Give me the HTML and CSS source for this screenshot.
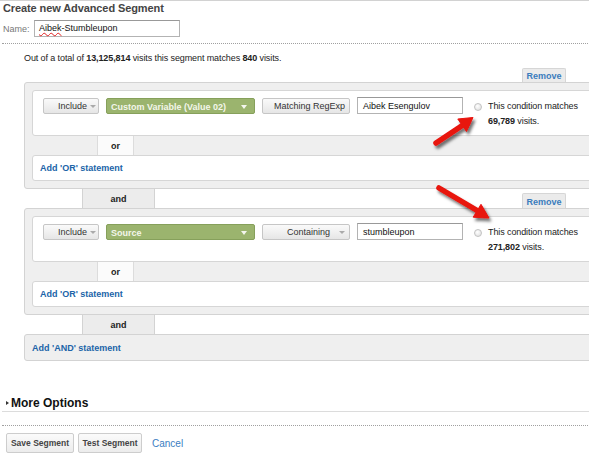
FILE: index.html
```html
<!DOCTYPE html>
<html lang="en">
<head>
<meta charset="utf-8">
<title>Create new Advanced Segment</title>
<link rel="stylesheet" href="styles.css">
</head>
<body>
<div class="page">
  <h1 class="title">Create new Advanced Segment</h1>
  <div class="name-row">
    <span class="name-label">Name:</span>
    <div class="field name-field"><span class="misspelled">Aibek</span>-Stumbleupon</div>
  </div>
  <div class="dotted"></div>
  <p class="summary">Out of a total of <b>13,125,814</b> visits this segment matches <b>840</b> visits.</p>

  <div class="segment">
    <div class="remove-row"><span class="remove">Remove</span></div>
    <div class="group">
      <div class="cond">
        <div class="btn btn-include">Include<span class="caret"></span></div>
        <div class="dim">Custom Variable (Value 02)<span class="caret caret-white"></span></div>
        <div class="btn btn-op btn-match">Matching RegExp</div>
        <div class="field cond-field">Aibek Esengulov</div>
        <span class="radio"></span>
        <div class="matches">This condition matches<br><b>69,789</b> visits.</div>
      </div>
      <div class="or-row"><span class="or">or</span></div>
      <div class="add-or">Add 'OR' statement</div>
    </div>
    <div class="and-row"><span class="and">and</span><span class="remove remove-right">Remove</span></div>
    <div class="group">
      <div class="cond">
        <div class="btn btn-include">Include<span class="caret"></span></div>
        <div class="dim">Source<span class="caret caret-white"></span></div>
        <div class="btn btn-op btn-contain">Containing<span class="caret caret-far"></span></div>
        <div class="field cond-field">stumbleupon</div>
        <span class="radio"></span>
        <div class="matches">This condition matches<br><b>271,802</b> visits.</div>
      </div>
      <div class="or-row"><span class="or">or</span></div>
      <div class="add-or">Add 'OR' statement</div>
    </div>
    <div class="and-row"><span class="and">and</span></div>
    <div class="add-and">Add 'AND' statement</div>
  </div>

  <div class="more"><span class="tri"></span>More Options</div>
  <div class="dotted dotted-bottom"></div>
  <div class="actions">
    <span class="abtn abtn-save">Save Segment</span>
    <span class="abtn abtn-test">Test Segment</span>
    <span class="cancel">Cancel</span>
  </div>
</div>

<svg class="arrows" width="589" height="460" viewBox="0 0 589 460" aria-hidden="true">
  <defs>
    <filter id="sh" x="-30%" y="-30%" width="160%" height="160%">
      <feDropShadow dx="2" dy="3" stdDeviation="1.4" flood-color="#000" flood-opacity="0.55"/>
    </filter>
  </defs>
  <g filter="url(#sh)" fill="#e8130d" stroke="#e8130d">
    <line x1="436" y1="143" x2="463" y2="125" stroke-width="5.5" stroke-linecap="round"/>
    <polygon points="473,117.5 466.5,131.5 457.8,119" stroke-width="1" stroke-linejoin="round"/>
    <line x1="439" y1="188" x2="478" y2="211" stroke-width="5.5" stroke-linecap="round"/>
    <polygon points="489,218 473.2,217.2 481,204.3" stroke-width="1" stroke-linejoin="round"/>
  </g>
</svg>
</body>
</html>
```

FILE: styles.css
```css
html, body {
  margin: 0;
  padding: 0;
  overflow: hidden;
  background: #fff;
}

body {
  font-family: "Liberation Sans", Arial, sans-serif;
  font-size: 9px;
  color: #222;
  position: relative;
  width: 589px;
  height: 460px;
}

.page {
  width: 640px;
  padding-left: 2px;
  border-top: 1px solid #d2d2d2;
}

.title {
  margin: 0;
  padding-left: 1px;
  font-size: 11px;
  font-weight: bold;
  letter-spacing: -0.1px;
  line-height: 14px;
  color: #444;
}

.name-row {
  display: flex;
  align-items: center;
  margin-top: 5px;
  padding-left: 1px;
}

.name-label {
  color: #777;
  width: 31px;
}

.field {
  box-sizing: border-box;
  height: 17px;
  line-height: 15px;
  border: 1px solid #b3b3b3;
  border-top-color: #999;
  background: #fff;
  color: #111;
  padding-left: 4px;
  white-space: nowrap;
}

.name-field {
  width: 146px;
}

.misspelled {
  text-decoration: underline wavy #e02020;
  text-decoration-thickness: 1px;
  text-underline-offset: 1px;
}

.dotted {
  margin-top: 6px;
  border-top: 1px dotted #a0a0a0;
  height: 0;
}

.summary {
  margin: 8px 0 0 22px;
  line-height: 12px;
  letter-spacing: -0.1px;
  color: #222;
}

.segment {
  margin-left: 22px;
  width: 580px;
}

.remove-row {
  display: flex;
  justify-content: flex-end;
  margin-top: 4px;
  padding-right: 38px;
}

.remove {
  box-sizing: border-box;
  width: 44px;
  height: 14px;
  line-height: 15px;
  text-align: center;
  background: #ebebeb;
  border: 1px solid #d6d6d6;
  border-bottom: none;
  border-radius: 2px 2px 0 0;
  font-weight: bold;
  color: #3a7cbd;
}

.group {
  background: #efefef;
  border: 1px solid #d3d3d3;
  border-radius: 3px;
  padding: 7px;
}

.cond {
  box-sizing: border-box;
  height: 46px;
  background: #fff;
  border: 1px solid #d6d6d6;
  border-radius: 3px;
  padding: 7px 0 0 10px;
  display: flex;
  align-items: flex-start;
}

.btn {
  box-sizing: border-box;
  height: 16px;
  line-height: 15px;
  border: 1px solid #c6c6c6;
  border-radius: 2px;
  background: linear-gradient(#fafafa, #e6e6e6);
  color: #333;
  white-space: nowrap;
  overflow: hidden;
  display: flex;
  align-items: center;
}

.btn-include {
  width: 56px;
  padding-left: 14px;
}

.caret {
  display: inline-block;
  width: 0;
  height: 0;
  border-left: 3px solid transparent;
  border-right: 3px solid transparent;
  border-top: 3px solid #aaa;
  margin-left: 3px;
}

.caret-white {
  border-left-width: 3.5px;
  border-right-width: 3.5px;
  border-top: 4px solid #f4f6ee;
  margin-left: 0;
}

.caret-far {
  margin-left: 9px;
}

.dim {
  box-sizing: border-box;
  width: 149px;
  height: 16px;
  margin-left: 7px;
  padding: 1px 7px 0 4px;
  background: #9bb46e;
  border: 1px solid #86a05b;
  border-radius: 2px;
  color: #f3f6ea;
  font-weight: bold;
  display: flex;
  align-items: center;
  justify-content: space-between;
  white-space: nowrap;
}

.btn-op {
  width: 88px;
  margin-left: 7px;
}

.btn-match {
  padding-left: 11px;
}

.btn-contain {
  padding-left: 24px;
}

.cond-field {
  width: 106px;
  margin-left: 7px;
  margin-top: -1px;
  padding-left: 5px;
  line-height: 16px;
}

.radio {
  box-sizing: border-box;
  width: 8px;
  height: 8px;
  margin: 5px 0 0 11px;
  border-radius: 50%;
  border: 1px solid #c2c2c2;
  background: radial-gradient(circle at 40% 35%, #fff, #dcdcdc);
}

.matches {
  margin: 1px 0 0 6px;
  line-height: 15px;
  letter-spacing: -0.1px;
  color: #222;
  white-space: nowrap;
}

.or-row {
  display: flex;
  height: 19px;
}

.or {
  box-sizing: border-box;
  width: 37px;
  margin-left: 65px;
  background: #fbfbfb;
  border-left: 1px solid #dcdcdc;
  border-right: 1px solid #dcdcdc;
  text-align: center;
  line-height: 20px;
  font-weight: bold;
  color: #222;
}

.add-or {
  box-sizing: border-box;
  height: 26px;
  line-height: 25px;
  background: #fff;
  border: 1px solid #d6d6d6;
  border-radius: 3px;
  padding-left: 7px;
  font-weight: bold;
  color: #2064a8;
}

.and-row {
  display: flex;
  align-items: flex-end;
  height: 19px;
}

.and {
  box-sizing: border-box;
  width: 73px;
  height: 19px;
  margin-left: 58px;
  background: #ececec;
  border-left: 1px solid #d3d3d3;
  border-right: 1px solid #d3d3d3;
  text-align: center;
  line-height: 20px;
  font-weight: bold;
  color: #222;
}

.remove-right {
  height: 15px;
  line-height: 16px;
  margin-left: auto;
  margin-right: 38px;
}

.add-and {
  box-sizing: border-box;
  height: 27px;
  line-height: 26px;
  background: #efefef;
  border: 1px solid #d3d3d3;
  border-radius: 3px;
  padding-left: 7px;
  font-weight: bold;
  color: #2064a8;
}

.more {
  margin-top: 34px;
  height: 16px;
  line-height: 17px;
  border-bottom: 1px solid #dcdcdc;
  font-size: 12px;
  font-weight: bold;
  color: #111;
  display: flex;
  align-items: center;
  padding-left: 4px;
}

.tri {
  width: 0;
  height: 0;
  border-top: 2.5px solid transparent;
  border-bottom: 2.5px solid transparent;
  border-left: 3px solid #333;
  margin-right: 2px;
}

.dotted-bottom {
  margin-top: 13px;
}

.actions {
  display: flex;
  align-items: center;
  margin-top: 7px;
  padding-left: 4px;
}

.abtn {
  box-sizing: border-box;
  height: 20px;
  line-height: 19px;
  border: 1px solid #cdcdcd;
  border-radius: 2px;
  background: linear-gradient(#fbfbfb, #ececec);
  font-size: 8.5px;
  font-weight: bold;
  color: #444;
  text-align: center;
}

.abtn-save {
  width: 68px;
}

.abtn-test {
  width: 64px;
  margin-left: 4px;
}

.cancel {
  margin-left: 10px;
  margin-top: 1px;
  font-size: 10px;
  color: #3b7ec2;
}

.arrows {
  position: absolute;
  left: 0;
  top: 0;
  pointer-events: none;
}
```
